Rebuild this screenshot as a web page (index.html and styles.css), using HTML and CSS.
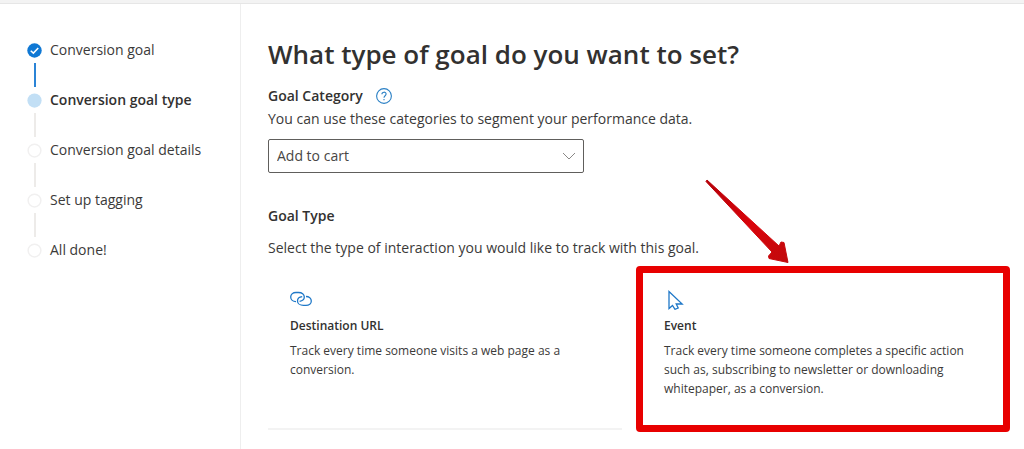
FILE: index.html
```html
<!DOCTYPE html>
<html lang="en">
<head>
<meta charset="utf-8">
<meta name="viewport" content="width=device-width, initial-scale=1">
<title>Conversion goal type</title>
<link rel="stylesheet" href="styles.css">
</head>
<body>
<div class="topbar"></div>
<div class="layout">
  <nav class="sidebar" aria-label="Progress">
    <ol class="steps">
      <li class="step done">
        <svg class="dot" viewBox="0 0 16 16" aria-hidden="true"><circle cx="8" cy="8" r="7.7" fill="#0f78d4"/><path d="M4 8.2 6.8 10.8 12 5.4" fill="none" stroke="#fff" stroke-width="1.6"/></svg>
        <span>Conversion goal</span>
      </li>
      <li class="step current" aria-current="step">
        <svg class="dot" viewBox="0 0 16 16" aria-hidden="true"><circle cx="8" cy="8" r="7.6" fill="#c2dff5"/></svg>
        <span>Conversion goal type</span>
      </li>
      <li class="step">
        <svg class="dot" viewBox="0 0 16 16" aria-hidden="true"><circle cx="8" cy="8" r="6.8" fill="#fff" stroke="#f1f0f0" stroke-width="1.6"/></svg>
        <span>Conversion goal details</span>
      </li>
      <li class="step">
        <svg class="dot" viewBox="0 0 16 16" aria-hidden="true"><circle cx="8" cy="8" r="6.8" fill="#fff" stroke="#f1f0f0" stroke-width="1.6"/></svg>
        <span>Set up tagging</span>
      </li>
      <li class="step">
        <svg class="dot" viewBox="0 0 16 16" aria-hidden="true"><circle cx="8" cy="8" r="6.8" fill="#fff" stroke="#f1f0f0" stroke-width="1.6"/></svg>
        <span>All done!</span>
      </li>
    </ol>
  </nav>
  <main class="content">
    <h1 class="title">What type of goal do you want to set?</h1>
    <div class="field-head">
      <label class="label" for="category">Goal Category</label>
      <button class="help" type="button" aria-label="About goal category">
        <svg class="help-icon" viewBox="0 0 16 16" aria-hidden="true"><circle cx="8" cy="8" r="7.4"/><path d="M5.9 6.3C5.9 3.5 10.1 3.5 10.1 6.1 10.1 7.8 8 7.8 8 9.8M8 11.1v1.2"/></svg>
      </button>
    </div>
    <p class="text">You can use these categories to segment your performance data.</p>
    <div class="select-wrap">
      <select class="select" id="category"><option>Add to cart</option></select>
      <svg class="chevron" viewBox="0 0 14 8" aria-hidden="true"><path d="M1 1l6 6 6-6"/></svg>
    </div>
    <h2 class="label section">Goal Type</h2>
    <p class="text">Select the type of interaction you would like to track with this goal.</p>
    <div class="cards">
      <button class="card" type="button">
        <svg class="icon" viewBox="0 0 22 22" aria-hidden="true"><path d="M6 13.600C3 13.600.7 11.700.7 9 .7 6.500 3 4.500 6 4.500H8.500C12 4.500 14.300 6.600 14.300 9 14.300 11.200 12.500 12.900 9.600 13.300M16 8.500C19 8.500 21.300 10.400 21.300 13 21.300 15.500 19 17.400 16 17.400H13.500C10 17.400 7.500 15.400 7.500 12.900 7.500 10.700 9.400 9 12.200 8.700"/></svg>
        <span class="card-title">Destination URL</span>
        <span class="card-text">Track every time someone visits a web page as a conversion.</span>
      </button>
      <button class="card highlighted" type="button">
        <svg class="icon" viewBox="0 0 22 22" aria-hidden="true"><path d="M5 3.500V20.500L8.500 17.400 11 21.300 14.200 20 12.200 16H18.200Z"/></svg>
        <span class="card-title">Event</span>
        <span class="card-text">Track every time someone completes a specific action such as, subscribing to newsletter or downloading whitepaper, as a conversion.</span>
        <svg class="arrow" viewBox="0 0 84 84" aria-hidden="true">
          <defs><linearGradient id="arrow-fill" x1="0" y1="0" x2="1" y2="1"><stop offset="0" stop-color="#b50008"/><stop offset=".55" stop-color="#d9040b"/><stop offset="1" stop-color="#c00a0c"/></linearGradient></defs>
          <path d="M2 1 74 67 76 63 79 63.500 83 83.500 64 79.500 63.500 77 67 73 1 2.500Z" fill="url(#arrow-fill)" stroke="url(#arrow-fill)" stroke-linejoin="round"/>
        </svg>
      </button>
    </div>
  </main>
</div>
</body>
</html>
```
FILE: styles.css
```css
* {
  box-sizing: border-box;
}

body {
  margin: 0;
  background: #fff;
  color: #3b3a39;
  font: 14px/20px "Open Sans", "Noto Sans", sans-serif;
}

h1, h2, p, ol {
  margin: 0;
  padding: 0;
}

button {
  font: inherit;
  color: inherit;
}

.topbar {
  height: 4px;
  background: #f3f3f3;
  border-bottom: 1px solid #e6e6e6;
}

.layout {
  display: grid;
  grid-template-columns: 241px 1fr;
  min-height: calc(100vh - 4px);
}

.sidebar {
  padding: 36px 20px 0 27px;
  border-right: 1px solid #eee;
}

.steps {
  list-style: none;
}

.step {
  display: grid;
  grid-template-columns: 15px 1fr;
  column-gap: 8px;
  align-items: center;
}

.step:not(:last-child)::after {
  content: "";
  width: 2px;
  height: 24px;
  margin: 3px 0;
  justify-self: center;
  background: #edebe9;
}

.step.done::after {
  background: #2b84d6;
}

.dot {
  width: 15px;
  height: 15px;
}

.current {
  color: #323130;
  font-weight: 600;
}

.content {
  padding: 30px 28px 17px 27px;
}

.title {
  color: #323130;
  font-size: 26px;
  line-height: 40px;
  font-weight: 600;
}

.field-head {
  display: flex;
  align-items: center;
  gap: 13px;
  margin-top: 12px;
}

.label {
  color: #323130;
  font-size: 14px;
  line-height: 20px;
  font-weight: 600;
}

.help {
  display: flex;
  padding: 0;
  border: 0;
  background: none;
}

.help-icon {
  width: 16px;
  height: 16px;
  fill: none;
  stroke: #2b80c5;
  stroke-width: 1.1;
}

.field-head + .text {
  margin-top: 3px;
}

.select-wrap {
  display: grid;
  align-items: center;
  width: 316px;
  max-width: 100%;
  margin-top: 10px;
}

.select {
  grid-area: 1 / 1;
  height: 34px;
  padding: 0 32px 0 8px;
  appearance: none;
  border: 1px solid #605e5c;
  border-radius: 2px;
  background: #fff;
  color: #484644;
  font: inherit;
}

.chevron {
  grid-area: 1 / 1;
  justify-self: end;
  width: 14px;
  height: 8px;
  margin-right: 8px;
  fill: none;
  stroke: #8a8886;
  pointer-events: none;
}

.section {
  margin-top: 33px;
}

.section + .text {
  margin-top: 12px;
}

.cards {
  display: grid;
  grid-template-columns: 1fr 1fr;
  gap: 20px;
  margin-top: 12px;
}

.card {
  position: relative;
  display: flex;
  flex-direction: column;
  align-items: flex-start;
  min-height: 160px;
  padding: 18px 22px;
  border: 0;
  border-bottom: 2px solid #f3f3f3;
  background: #fff;
  text-align: left;
}

.icon {
  width: 22px;
  height: 22px;
  fill: none;
  stroke: #1f78c8;
  stroke-width: 1.3;
}

.card-title {
  margin-top: 6px;
  color: #323130;
  font-size: 12px;
  line-height: 20px;
  font-weight: 600;
}

.card-text {
  margin-top: 5px;
  font-size: 12px;
  line-height: 19px;
}

.highlighted::after {
  content: "";
  position: absolute;
  inset: -4px -14px -4px -6px;
  border: 7px solid #e80000;
  border-radius: 4px;
}

.arrow {
  position: absolute;
  left: 63px;
  bottom: calc(100% + 7px);
  width: 84px;
  height: 84px;
}
```
